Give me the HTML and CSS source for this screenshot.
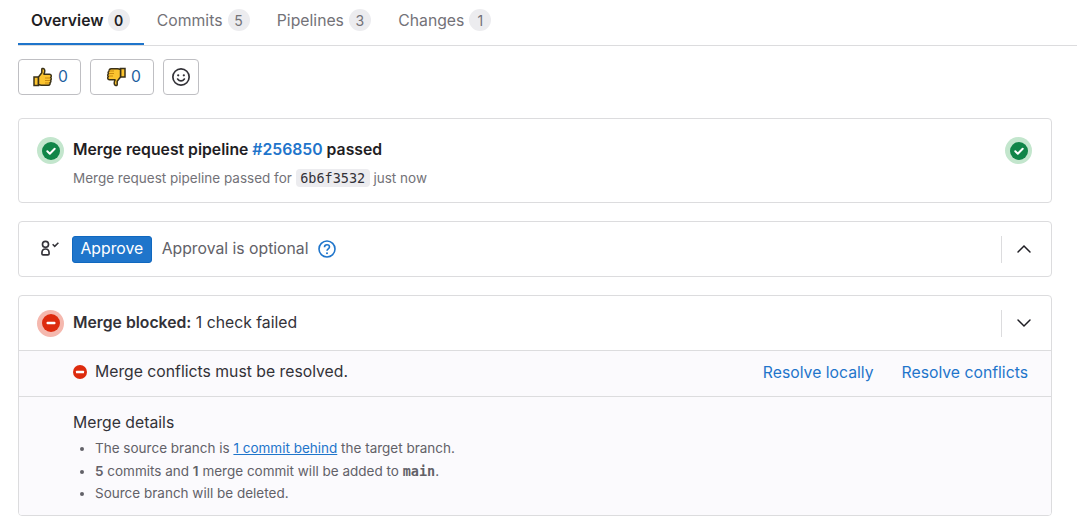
FILE: index.html
```html
<!DOCTYPE html>
<html lang="en">
<head>
<meta charset="utf-8">
<title>Merge request</title>
<link rel="stylesheet" href="styles.css">
</head>
<body>
<nav class="tabs">
  <a class="tab tab-active">Overview <span class="count">0</span></a>
  <a class="tab">Commits <span class="count">5</span></a>
  <a class="tab">Pipelines <span class="count">3</span></a>
  <a class="tab">Changes <span class="count">1</span></a>
</nav>
<main class="content">
  <div class="awards">
    <button class="award">
      <svg class="emoji" viewBox="0 0 20 20"><path d="M1 10h4.500v8.500H1z" fill="#fcc42f" stroke="#3a3118" stroke-width="1.500"/><path d="M5.500 10l3.300-4.200V2.200c0-1.200 3-1.200 3 1.600 0 1.500-.5 2.600-.9 3.400h5.600c2.200 0 2.200 2.700 1.100 3.200 1 .7.800 2.300-.1 2.700.7.800.4 2.200-.5 2.500.4 1.100-.2 2.600-1.600 2.600H8.500c-1.200 0-2-.3-3-.8z" fill="#fcc42f" stroke="#3a3118" stroke-width="1.500" stroke-linejoin="round"/><path d="M12 11h5M12 13.500h5M12 16h4" stroke="#c98a10" stroke-width="1"/></svg>
      <span>0</span>
    </button>
    <button class="award award-down">
      <svg class="emoji" viewBox="0 0 20 20"><path d="M14.500 1.500H19v8.500h-4.500z" fill="#fcc42f" stroke="#3a3118" stroke-width="1.500"/><path d="M14.500 10l-3.300 4.200v3.600c0 1.200-3 1.200-3-1.600 0-1.500.5-2.600.9-3.400H3.500c-2.200 0-2.200-2.700-1.100-3.200-1-.7-.8-2.300.1-2.700-.7-.8-.4-2.200.5-2.500C3.100 3.300 3.700 1.800 5.100 1.800h6.400c1.200 0 2 .2 3 .7z" fill="#fcc42f" stroke="#3a3118" stroke-width="1.500" stroke-linejoin="round"/><path d="M3 4h5M3 6.500h5M3 9h4" stroke="#c98a10" stroke-width="1"/></svg>
      <span>0</span>
    </button>
    <button class="award award-icon">
      <svg class="icon16" viewBox="0 0 16 16"><circle cx="8" cy="8" r="7.250" fill="none" stroke="#333238" stroke-width="1.500"/><circle cx="5.500" cy="6.500" r="1" fill="#333238"/><circle cx="10.500" cy="6.500" r="1" fill="#333238"/><path d="M5 9.800c.8 1.100 1.800 1.700 3 1.700s2.200-.6 3-1.700" fill="none" stroke="#333238" stroke-width="1.500" stroke-linecap="round"/></svg>
    </button>
  </div>

  <section class="card card-pipeline">
    <span class="halo halo-green">
      <svg class="status" viewBox="0 0 18 18"><circle cx="9" cy="9" r="9" fill="#108548"/><path d="M5.300 9.300l2.500 2.400 4.900-5" fill="none" stroke="#fff" stroke-width="2" stroke-linecap="round" stroke-linejoin="round"/></svg>
    </span>
    <div class="pipeline-body">
      <div class="pipeline-title">Merge request pipeline <a class="link">#256850</a> passed</div>
      <div class="pipeline-sub">Merge request pipeline passed for <code class="sha">6b6f3532</code> just now</div>
    </div>
    <span class="halo halo-green">
      <svg class="status" viewBox="0 0 18 18"><circle cx="9" cy="9" r="9" fill="#108548"/><path d="M5.300 9.300l2.500 2.400 4.900-5" fill="none" stroke="#fff" stroke-width="2" stroke-linecap="round" stroke-linejoin="round"/></svg>
    </span>
  </section>

  <section class="card card-approval">
    <div class="row row-approve">
      <svg class="approval-icon" viewBox="0 0 20 16"><circle cx="5" cy="3.750" r="2.750" fill="none" stroke="#333238" stroke-width="1.500"/><path d="M1.750 11.500c0-2.200 1.400-3.500 3.250-3.500s3.250 1.300 3.250 3.500v.8c0 .6-.4 1-1 1h-4.500c-.6 0-1-.4-1-1z" fill="none" stroke="#333238" stroke-width="1.500"/><path d="M11.500 3.700l1.900 1.900 3.300-3.300" fill="none" stroke="#333238" stroke-width="1.400"/></svg>
      <button class="approve">Approve</button>
      <span class="optional">Approval is optional</span>
      <svg class="help" viewBox="0 0 18 18"><circle cx="9" cy="9" r="8" fill="none" stroke="#1f75cb" stroke-width="1.600"/><path d="M6.500 7.200c0-1.500 1.100-2.400 2.500-2.400s2.500.9 2.500 2.200c0 1.900-2.500 1.900-2.500 3.800" fill="none" stroke="#1f75cb" stroke-width="1.600"/><circle cx="9" cy="13.200" r="1" fill="#1f75cb"/></svg>
      <span class="toggle">
        <svg class="chev" viewBox="0 0 16 16"><path d="M2 11l6-6 6 6" fill="none" stroke="#1f1e24" stroke-width="1.500" stroke-linecap="round"/></svg>
      </span>
    </div>
  </section>

  <section class="card card-merge">
    <div class="row row-blocked">
      <span class="halo halo-red">
        <svg class="status" viewBox="0 0 18 18"><circle cx="9" cy="9" r="9" fill="#dd2b0e"/><rect x="4.500" y="7.750" width="9" height="2.500" rx="1" fill="#fff"/></svg>
      </span>
      <span class="blocked-text"><strong>Merge blocked:</strong> 1 check failed</span>
      <span class="toggle">
        <svg class="chev" viewBox="0 0 16 16"><path d="M2 5l6 6 6-6" fill="none" stroke="#1f1e24" stroke-width="1.500" stroke-linecap="round"/></svg>
      </span>
    </div>
    <div class="row row-conflict">
      <svg class="conflict-icon" viewBox="0 0 14 14"><circle cx="7" cy="7" r="7" fill="#dd2b0e"/><rect x="3" y="5.750" width="8" height="2.500" rx=".5" fill="#fff"/></svg>
      <span class="conflict-text">Merge conflicts must be resolved.</span>
      <a class="link action">Resolve locally</a>
      <a class="link action">Resolve conflicts</a>
    </div>
    <div class="details">
      <h3 class="details-title">Merge details</h3>
      <ul class="details-list">
        <li>The source branch is <a class="link underlined">1 commit behind</a> the target branch.</li>
        <li><strong>5</strong> commits and <strong>1</strong> merge commit will be added to <code class="branch">main</code>.</li>
        <li>Source branch will be deleted.</li>
      </ul>
    </div>
  </section>
</main>
</body>
</html>
```

FILE: styles.css
```css
* { box-sizing: border-box; }
html, body { margin: 0; padding: 0; }
body {
  background: #fff;
  color: #333238;
  font-family: Inter, "Noto Sans", sans-serif;
  font-size: 14px;
  overflow: hidden;
  height: 529px;
}
.tabs {
  display: flex;
  margin-left: 18px;
  height: 46px;
  border-bottom: 1px solid #dcdcde;
}
.tab {
  display: flex;
  align-items: center;
  gap: 5px;
  height: 45px;
  padding: 0 14.300px 5px 13px;
  font-size: 15.750px;
  color: #737278;
  white-space: nowrap;
}
.tab-active {
  color: #1f1e24;
  font-weight: 600;
  gap: 4px;
  border-bottom: 2px solid #1f75cb;
  padding-bottom: 3px;
}
.count {
  display: inline-flex;
  align-items: center;
  justify-content: center;
  width: 22px;
  height: 22px;
  border-radius: 50%;
  background: #ececef;
  font-size: 14px;
  color: #737278;
}
.tab-active .count { color: #1f1e24; }
.content { padding: 13px 25px 0 18px; }
.awards { display: flex; gap: 9px; height: 36px; }
.award {
  display: flex;
  align-items: center;
  justify-content: center;
  gap: 5px;
  height: 36px;
  padding: 0 12px 0 14px;
  border: 1px solid #bfbfc3;
  border-radius: 4px;
  background: #fff;
  font: inherit;
  font-size: 15.750px;
  color: #1f5f9f;
}
.award span { position: relative; top: -1px; }
.award-down { padding-left: 15px; }
.award-icon { width: 36px; padding: 0; }
.emoji { width: 20px; height: 20px; }
.icon16 { width: 18px; height: 18px; }
.card {
  border: 1px solid #dcdcde;
  border-radius: 4px;
  background: #fff;
  overflow: hidden;
}
.card-pipeline {
  display: flex;
  align-items: flex-start;
  margin-top: 23px;
  height: 85px;
  padding: 18px 19px 0 18px;
}
.card-approval { margin-top: 18px; }
.card-merge { margin-top: 18px; }
.halo {
  display: flex;
  align-items: center;
  justify-content: center;
  flex: none;
  width: 27px;
  height: 27px;
  border-radius: 50%;
}
.halo-green { background: #c3e6cd; }
.halo-red { background: #f5b8ae; }
.status { width: 18px; height: 18px; }
.pipeline-body { flex: 1; margin-left: 9px; }
.pipeline-title {
  font-size: 15.750px;
  font-weight: 600;
  line-height: 26px;
  color: #1f1e24;
}
.pipeline-sub {
  margin-top: 5px;
  font-size: 13.500px;
  line-height: 20px;
  color: #737278;
}
.link { color: #1f75cb; }
.sha {
  display: inline-block;
  padding: 0 4.500px;
  border-radius: 4px;
  background: #ececef;
  color: #333238;
  font-family: "DejaVu Sans Mono", monospace;
  font-size: 13.500px;
  line-height: 18px;
}
.row { display: flex; align-items: center; }
.row-approve { height: 54px; padding: 0 19px 0 21px; }
.approval-icon { width: 22px; height: 18px; flex: none; margin-right: 10px; }
.approve {
  height: 27px;
  padding: 0 7.500px 2px;
  border: 1px solid #1068bf;
  border-radius: 3px;
  background: #1f75cb;
  color: #fff;
  font: inherit;
  font-size: 15.750px;
}
.optional { margin-left: 10px; padding-bottom: 2px; font-size: 15.750px; color: #626168; }
.help { width: 18px; height: 18px; margin-left: 9px; }
.toggle {
  display: flex;
  align-items: center;
  margin-left: auto;
  height: 27px;
  padding-left: 14px;
  border-left: 1px solid #dcdcde;
}
.chev { width: 16px; height: 16px; }
.row-blocked { height: 55px; padding: 0 19px 0 18px; border-bottom: 1px solid #dcdcde; }
.blocked-text { margin-left: 9px; padding-bottom: 2px; font-size: 15.750px; color: #333238; }
.blocked-text strong { font-weight: 600; }
.row-conflict {
  height: 46px;
  padding: 0 23px 4px 54px;
  background: #fbfafd;
  border-bottom: 1px solid #dcdcde;
}
.conflict-icon { width: 14px; height: 14px; flex: none; }
.conflict-text { margin-left: 8px; font-size: 15.750px; color: #333238; flex: 1; }
.action { font-size: 15.750px; margin-left: 28px; margin-top: 2px; }
.details { padding: 15px 20px 12px 54px; background: #fbfafd; height: 118px; }
.details-title { margin: 0; font-size: 15.750px; font-weight: 400; line-height: 22px; color: #333238; }
.details-list {
  margin: 3px 0 0;
  padding: 0 0 0 22px;
  font-size: 13.500px;
  line-height: 22.500px;
  color: #626168;
}
.details-list strong { font-weight: 600; }
.underlined { text-decoration: underline; }
.branch { font-family: "DejaVu Sans Mono", monospace; font-size: 13.500px; font-weight: 700; color: #626168; }
```
